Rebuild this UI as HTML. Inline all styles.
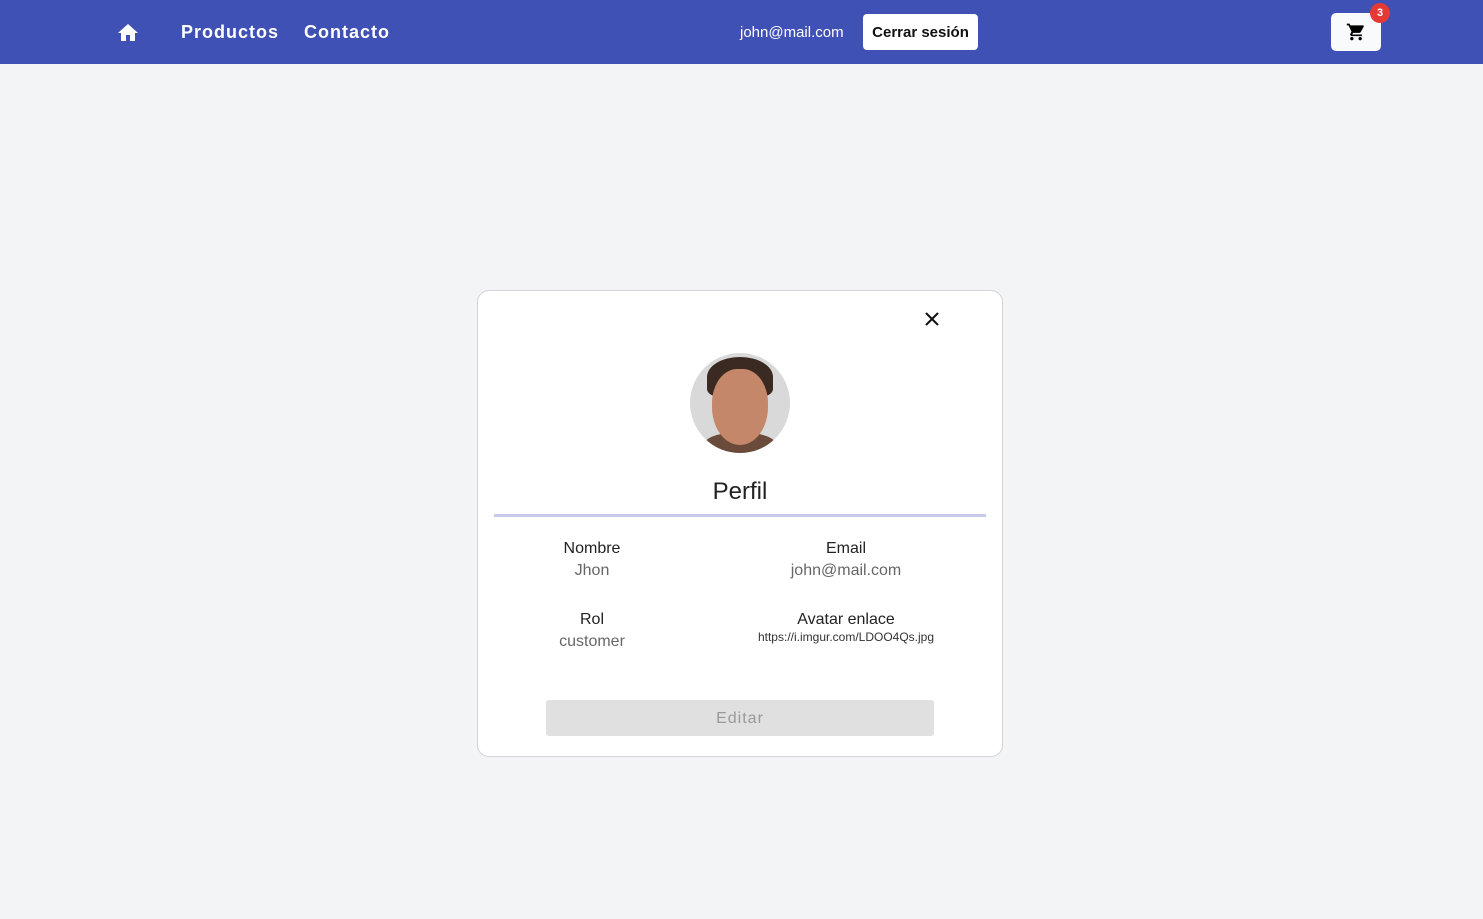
<!DOCTYPE html>
<html><head><meta charset="utf-8"><style>
*{box-sizing:border-box;margin:0;padding:0}
body{width:1483px;height:919px;background:#f3f4f6;font-family:"Liberation Sans",sans-serif;position:relative;overflow:hidden}
.nav{position:absolute;left:0;top:0;width:1483px;height:64px;background:#3f51b5;color:#fff}
.abs{position:absolute}
.card{position:absolute;left:477px;top:290px;width:526px;height:467px;background:#fff;border:1px solid #d4d4d8;border-radius:12px}
.c{text-align:center;position:absolute}
</style></head><body>
<div class="nav">
<svg class="abs" style="left:118px;top:24px" width="20" height="17" viewBox="0 0 20 17"><path d="M8 17v-6h4v6h5V9h3L10 0 0 9h3v8z" fill="#fff"/></svg>
<div class="abs" style="left:181px;top:22px;font-size:18px;font-weight:bold;letter-spacing:1px">Productos</div>
<div class="abs" style="left:304px;top:22px;font-size:18px;font-weight:bold;letter-spacing:1px">Contacto</div>
<div class="abs" style="left:740px;top:24px;font-size:15px">john@mail.com</div>
<div class="abs" style="left:863px;top:14px;width:115px;height:36px;background:#fff;border-radius:4px;color:#111;font-weight:bold;font-size:15px;text-align:center;line-height:37px">Cerrar sesión</div>
<div class="abs" style="left:1331px;top:13px;width:50px;height:38px;background:#f8fafc;border-radius:5px"></div>
<svg class="abs" style="left:1345px;top:22px" width="22" height="20" viewBox="0 0 24 24"><path d="M7 18a2 2 0 1 0 0 4 2 2 0 0 0 0-4zM1 2v2h2l3.6 7.6-1.35 2.4C4.5 15.4 5.5 17 7 17h12v-2H7.4l1.1-2h7.45c.75 0 1.4-.4 1.75-1l3.6-6.5A1 1 0 0 0 20.4 4H5.2l-.9-2zm16 16a2 2 0 1 0 0 4 2 2 0 0 0 0-4z" fill="#000"/></svg>
<div class="abs" style="left:1370px;top:3px;width:20px;height:20px;border-radius:50%;background:#e53935;color:#fff;font-size:11px;font-weight:bold;text-align:center;line-height:20px">3</div>
</div>
<div class="card">
<div class="abs" style="left:212px;top:62px;width:100px;height:100px;border-radius:50%;background:#d9d9d9;overflow:hidden">
<div class="abs" style="left:14px;top:80px;width:72px;height:30px;border-radius:40%;background:#6a4a3a"></div>
<div class="abs" style="left:17px;top:4px;width:66px;height:40px;border-radius:50% 50% 20% 20%;background:#3a2a22"></div>
<div class="abs" style="left:22px;top:16px;width:56px;height:76px;border-radius:45% 45% 50% 50%;background:#c4876a"></div>
</div>
<svg class="abs" style="left:447px;top:21px" width="14" height="14" viewBox="0 0 14 14"><path d="M1 1l12 12M13 1L1 13" stroke="#111" stroke-width="2"/></svg>
<div class="c" style="left:0;width:524px;top:187px;font-size:24px;color:#222">Perfil</div>
<div class="abs" style="left:16px;top:223px;width:492px;height:3px;background:#c5cae9"></div>
<div class="c" style="left:14px;width:200px;top:249px;font-size:16px;color:#222">Nombre</div>
<div class="c" style="left:14px;width:200px;top:271px;font-size:16px;color:#666">Jhon</div>
<div class="c" style="left:268px;width:200px;top:249px;font-size:16px;color:#222">Email</div>
<div class="c" style="left:268px;width:200px;top:271px;font-size:16px;color:#666">john@mail.com</div>
<div class="c" style="left:14px;width:200px;top:320px;font-size:16px;color:#222">Rol</div>
<div class="c" style="left:14px;width:200px;top:342px;font-size:16px;color:#666">customer</div>
<div class="c" style="left:218px;width:300px;top:320px;font-size:16px;color:#222">Avatar enlace</div>
<div class="c" style="left:218px;width:300px;top:339px;font-size:12px;color:#333">https://i.imgur.com/LDOO4Qs.jpg</div>
<div class="c" style="left:68px;top:409px;width:388px;height:36px;background:#e0e0e0;border-radius:3px;color:#999;font-size:16px;line-height:37px;letter-spacing:1px">Editar</div>
</div>
</body></html>
